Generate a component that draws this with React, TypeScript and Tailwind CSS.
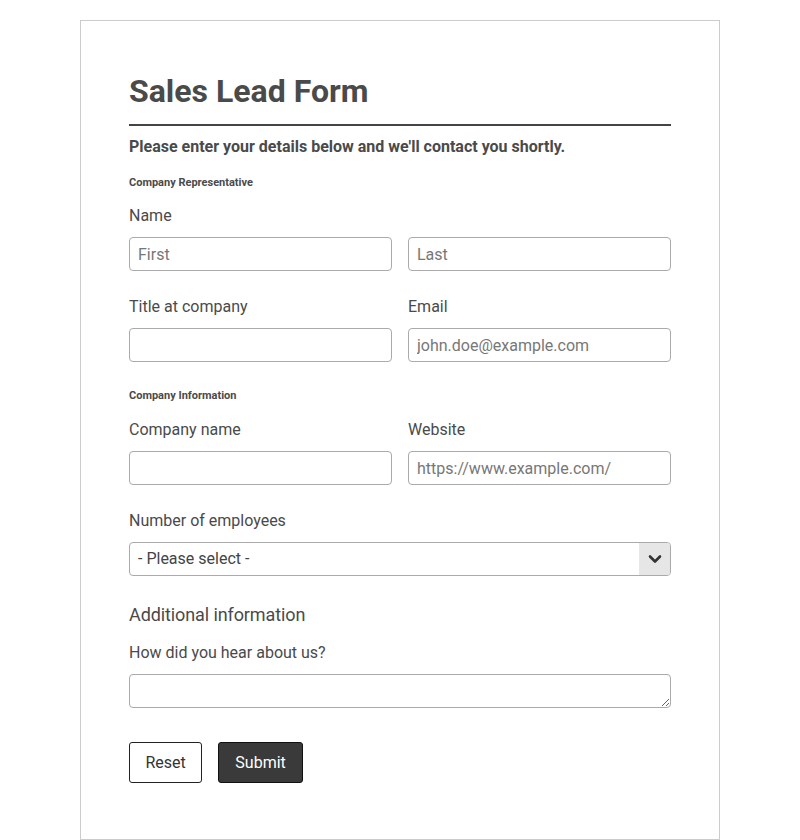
import React from "react";

const labelCls = "block text-[16px] leading-6 text-[#4a4a4a]";
const inputCls =
  "block w-full h-[34px] rounded-[4px] border border-[#aaa] bg-white px-2 text-[16px] text-[#444] placeholder:text-[#777] outline-none";

export default function App() {
  return (
    <div className="min-h-[840px] bg-white pt-5 font-['Roboto',sans-serif] text-[#4a4a4a]">
      <div className="mx-auto w-[640px] border border-[#ccc] px-12 pt-12 pb-14">
        <h1 className="text-[32px] leading-[44px] font-bold text-[#4a4a4a]">Sales Lead Form</h1>
        <hr className="mt-[11px] border-0 border-t-2 border-[#444]" />
        <p className="mt-[9px] text-[16px] leading-6 font-bold text-[#4a4a4a]">
          Please enter your details below and we'll contact you shortly.
        </p>

        <h4 className="mt-4 text-[11px] leading-4 font-bold text-[#4a4a4a]">Company Representative</h4>
        <label className={labelCls + " mt-[13px]"}>Name</label>
        <div className="mt-[9px] grid grid-cols-2 gap-4">
          <input className={inputCls} placeholder="First" />
          <input className={inputCls} placeholder="Last" />
        </div>

        <div className="mt-[24px] grid grid-cols-2 gap-4">
          <div>
            <label className={labelCls}>Title at company</label>
            <input className={inputCls + " mt-[9px]"} />
          </div>
          <div>
            <label className={labelCls}>Email</label>
            <input className={inputCls + " mt-[9px]"} placeholder="john.doe@example.com" />
          </div>
        </div>

        <h4 className="mt-[26px] text-[11px] leading-4 font-bold text-[#4a4a4a]">Company Information</h4>
        <div className="mt-[14px] grid grid-cols-2 gap-4">
          <div>
            <label className={labelCls}>Company name</label>
            <input className={inputCls + " mt-[9px]"} />
          </div>
          <div>
            <label className={labelCls}>Website</label>
            <input className={inputCls + " mt-[9px]"} placeholder="https://www.example.com/" />
          </div>
        </div>

        <label className={labelCls + " mt-[24px]"}>Number of employees</label>
        <div className="mt-[9px] flex h-[34px] w-full overflow-hidden rounded-[4px] border border-[#aaa] bg-white">
          <div className="flex flex-1 items-center px-2 text-[16px] text-[#444]">- Please select -</div>
          <div className="flex w-[31px] items-center justify-center bg-[#e6e6e6]">
            <svg width="14" height="14" viewBox="0 0 14 14" fill="none">
              <path d="M2 4.5 L7 9.5 L12 4.5" stroke="#333" strokeWidth="2.6" strokeLinecap="round" strokeLinejoin="round" />
            </svg>
          </div>
        </div>

        <h3 className="mt-[25px] text-[18px] leading-7 tracking-[-0.1px] text-[#4a4a4a]">Additional information</h3>
        <label className={labelCls + " mt-3"}>How did you hear about us?</label>
        <textarea className="mt-[9px] block h-[34px] w-full rounded-[4px] border border-[#aaa] bg-white px-2 text-[16px] outline-none" />

        <div className="mt-[34px] flex gap-4">
          <button className="h-[41px] rounded-[3px] border border-[#222] bg-white px-[15.5px] text-[16px] text-[#333]">
            Reset
          </button>
          <button className="h-[41px] rounded-[3px] border border-[#111] bg-[#3a3a3a] px-4 text-[16px] text-white">
            Submit
          </button>
        </div>
      </div>
    </div>
  );
}
